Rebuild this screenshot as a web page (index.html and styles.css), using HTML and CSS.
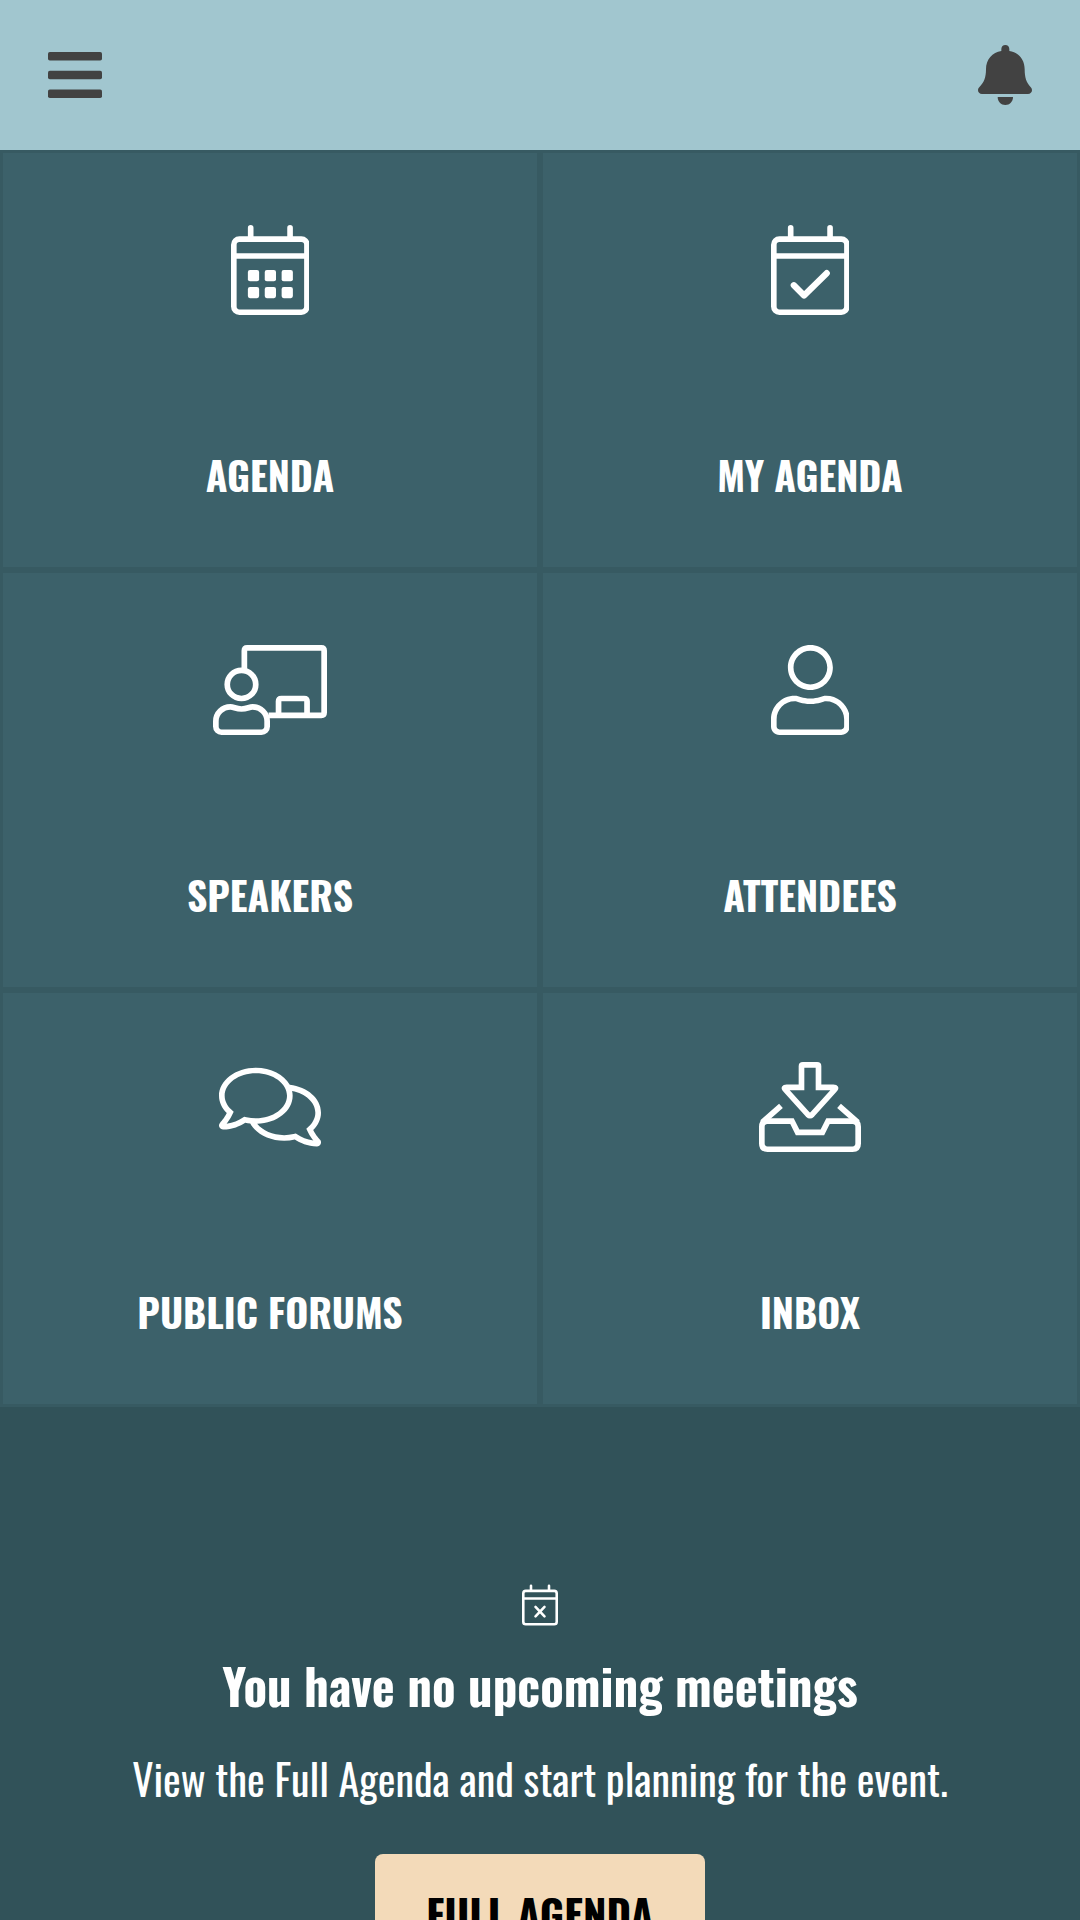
FILE: index.html
```html
<!DOCTYPE html>
<html lang="en">
<head>
    <meta charset="UTF-8">
    <meta name="viewport" content="width=device-width, initial-scale=1.0">
    <title>Event Home</title>
    <link rel="stylesheet" href="styles.css">
</head>
<body>
    <header class="topbar">
        <svg class="menu-icon" viewBox="0 0 54 46">
            <rect width="54" height="8.6" rx="1.8"/>
            <rect y="18.7" width="54" height="8.6" rx="1.8"/>
            <rect y="37.4" width="54" height="8.6" rx="1.8"/>
        </svg>
        <svg class="bell-icon" viewBox="0 0 162 180">
            <path d="M82 0C75 0 70 5 70 12V18C43 22 24 43 24 73C24 98 18 112 5 125C1 129 0 132 0 136C0 142 5 147 12 147H150C157 147 162 142 162 136C162 132 161 129 157 125C145 112 140 98 140 73C140 43 121 22 94 18V12C94 5 89 0 82 0Z"/>
            <path d="M59 156H105C105 170 95 180 82 180S59 170 59 156Z"/>
        </svg>
    </header>

    <main class="tiles">
        <a class="tile">
            <svg class="icon" viewBox="0 0 448 512">
                <g class="line">
                    <rect x="16" y="80" width="416" height="416" rx="32"/>
                    <path d="M16 176H432"/>
                    <path class="round" d="M112 16V72M336 16V72"/>
                </g>
                <rect x="96" y="256" width="64" height="64" rx="12"/>
                <rect x="192" y="256" width="64" height="64" rx="12"/>
                <rect x="288" y="256" width="64" height="64" rx="12"/>
                <rect x="96" y="352" width="64" height="64" rx="12"/>
                <rect x="192" y="352" width="64" height="64" rx="12"/>
                <rect x="288" y="352" width="64" height="64" rx="12"/>
            </svg>
            <span class="label">AGENDA</span>
        </a>
        <a class="tile">
            <svg class="icon" viewBox="0 0 448 512">
                <g class="line">
                    <rect x="16" y="80" width="416" height="416" rx="32"/>
                    <path d="M16 176H432"/>
                    <path class="round" d="M112 16V72M336 16V72"/>
                    <path class="round mark" d="M130 343L188 401L317 274"/>
                </g>
            </svg>
            <span class="label">MY AGENDA</span>
        </a>
        <a class="tile">
            <svg class="icon board" viewBox="0 0 640 512" preserveAspectRatio="none">
                <g class="line">
                    <path d="M176 136V32Q176 16 192 16H608Q624 16 624 32V384Q624 400 608 400H312"/>
                    <path d="M368 400V320Q368 304 384 304H512Q528 304 528 320V400"/>
                    <circle cx="160" cy="224" r="80"/>
                    <path d="M222 352c-20 0-30 12-62 12s-42-12-62-12C53 352 16 388 16 434v30c0 18 14 32 32 32h224c18 0 32-14 32-32v-30c0-46-37-82-82-82z"/>
                </g>
            </svg>
            <span class="label">SPEAKERS</span>
        </a>
        <a class="tile">
            <svg class="icon" viewBox="0 0 448 512">
                <path d="M313.6 288c-28.7 0-42.5 16-89.6 16-47.1 0-60.8-16-89.6-16C60.2 288 0 348.2 0 422.4V464c0 26.5 21.5 48 48 48h352c26.5 0 48-21.5 48-48v-41.6c0-74.2-60.2-134.4-134.4-134.4zM416 464c0 8.8-7.2 16-16 16H48c-8.8 0-16-7.2-16-16v-41.6C32 365.9 77.9 320 134.4 320c19.6 0 39.1 16 89.6 16 50.4 0 70-16 89.6-16 56.5 0 102.4 45.9 102.4 102.4V464zM224 256c70.7 0 128-57.3 128-128S294.7 0 224 0 96 57.3 96 128s57.3 128 128 128zm0-224c52.9 0 96 43.1 96 96s-43.1 96-96 96-96-43.1-96-96 43.1-96 96-96z"/>
            </svg>
            <span class="label">ATTENDEES</span>
        </a>
        <a class="tile">
            <svg class="icon wide" viewBox="0 0 576 512" preserveAspectRatio="none">
                <path d="M569.9 441.1c-.5-.4-22.6-24.2-37.9-54.9 27.5-27.1 44-61.1 44-98.2 0-80-76.5-146.1-176.2-157.9C368.4 72.5 294.3 32 208 32 93.1 32 0 103.6 0 192c0 37 16.5 71 44 98.2-15.3 30.7-37.3 54.5-37.7 54.9-6.3 6.7-8.1 16.5-4.4 25 3.6 8.5 12 14 21.2 14 53.5 0 96.7-20.2 125.2-38.8 9.1 2.1 18.4 3.7 28 4.8 31.5 57.5 105.5 98 191.8 98 20.8 0 40.8-2.4 59.8-6.8 28.5 18.5 71.6 38.8 125.2 38.8 9.2 0 17.5-5.5 21.2-14 3.6-8.5 1.9-18.3-4.4-25zM155.4 314l-13.2-3-11.4 7.4c-20.1 13.1-50.5 28.2-87.7 32.5 8.8-11.3 20.2-27.6 29.5-46.4L83 283.7l-16.5-16.3C50.7 251.9 32 226.2 32 192c0-70.6 79-128 176-128s176 57.4 176 128-79 128-176 128c-17.7 0-35.4-2-52.6-6zm289.8 100.4l-11.4-7.4-13.2 3.1c-17.2 4-34.9 6-52.6 6-65.1 0-122-25.9-152.4-64.3C326.9 348.6 416 278.4 416 192c0-9.5-1.3-18.7-3.3-27.7C488.1 178.8 544 228.7 544 288c0 34.2-18.7 59.9-34.5 75.4L493 379.7l10.3 20.7c9.4 18.9 20.8 35.2 29.5 46.4-37.1-4.2-67.5-19.4-87.6-32.4z"/>
            </svg>
            <span class="label">PUBLIC FORUMS</span>
        </a>
        <a class="tile">
            <svg class="icon wide" viewBox="0 0 576 512" preserveAspectRatio="none">
                <g class="line">
                    <path d="M240 24Q240 16 248 16H328Q336 16 336 24V144H420Q440 144 427 157L300 299Q288 310 276 299L149 157Q136 144 156 144H240Z"/>
                    <path d="M16 368V464Q16 496 48 496H528Q560 496 560 464V368Q560 336 528 336H390L358 400H218L186 336H48Q16 336 16 368Z"/>
                    <path d="M18 344L124 250M558 344L452 250"/>
                </g>
            </svg>
            <span class="label">INBOX</span>
        </a>
    </main>

    <section class="meetings">
        <svg class="empty-icon" viewBox="0 0 448 512">
            <g class="line">
                <rect x="16" y="80" width="416" height="416" rx="32"/>
                <path d="M16 176H432"/>
                <path class="round" d="M112 16V72M336 16V72M168 280L280 398M280 280L168 398"/>
            </g>
        </svg>
        <h3 class="title">You have no upcoming meetings</h3>
        <p class="text">View the Full Agenda and start planning for the event.</p>
        <a class="button">FULL AGENDA</a>
    </section>
</body>
</html>
```
FILE: styles.css
```css
* {
    box-sizing: border-box;
}
body {
    margin: 0;
    height: 1920px;
    overflow: hidden;
    background: #315259;
    color: #fff;
    font-family: Oswald, Roboto, sans-serif;
}
svg {
    display: block;
    fill: currentColor;
}
.line {
    fill: none;
    stroke: currentColor;
    stroke-width: 32;
}
.round {
    stroke-linecap: round;
    stroke-linejoin: round;
}
.mark {
    stroke-width: 36;
}

.topbar {
    display: flex;
    justify-content: space-between;
    align-items: center;
    height: 150px;
    padding: 0 48px;
    background: #a1c6cf;
    color: #424242;
}
.menu-icon {
    width: 54px;
    height: 46px;
}
.bell-icon {
    width: 54px;
    height: 60px;
}

.tiles {
    display: grid;
    grid-template-columns: 1fr 1fr;
    grid-template-rows: 420px 420px 417px;
}
.tile {
    display: flex;
    flex-direction: column;
    align-items: center;
    padding-top: 72px;
    background: #3c616a;
    border: 3px solid #375a62;
}
.tile:nth-child(n+5) {
    padding-top: 69px;
}
.icon {
    height: 90px;
}
.board {
    width: 114px;
}
.wide {
    width: 102px;
}
.label {
    margin-top: 133px;
    font-size: 39.5px;
    line-height: 52px;
    font-weight: 700;
    white-space: nowrap;
}

.meetings {
    display: flex;
    flex-direction: column;
    align-items: center;
    padding-top: 177px;
    white-space: nowrap;
}
.empty-icon {
    width: 36px;
    height: 42px;
}
.title {
    margin: 27px 0 0;
    font-size: 48.8px;
    line-height: 64px;
    font-weight: 700;
}
.text {
    margin: 33px 0 0;
    font-size: 42.2px;
    line-height: 56px;
}
.button {
    width: 330px;
    height: 120px;
    margin-top: 48px;
    padding-top: 32px;
    border-radius: 8px;
    background: #f3dab9;
    color: #000;
    font-size: 42px;
    line-height: 54px;
    font-weight: 700;
    text-align: center;
}
```
